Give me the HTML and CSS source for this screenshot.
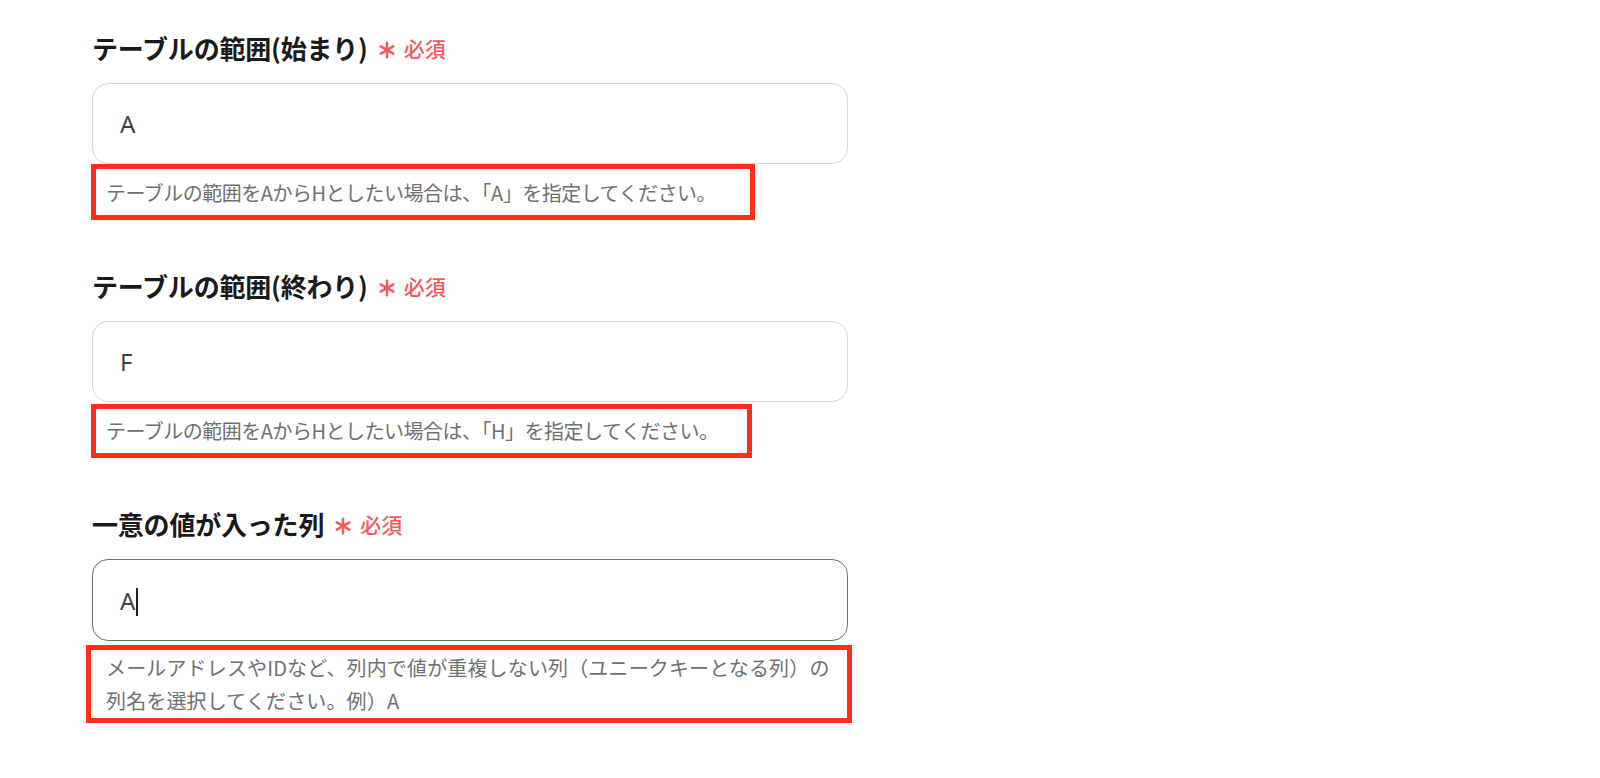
FILE: index.html
```html
<!DOCTYPE html>
<html lang="ja">
<head>
<meta charset="utf-8">
<title>フォーム</title>
<link rel="stylesheet" href="styles.css">
</head>
<body>
<main class="form">
  <section class="field field-first">
    <div class="label">テーブルの範囲(始まり)<span class="req"><svg class="ast" viewBox="0 0 20 20" aria-hidden="true"><path d="M10 2v16M3 6l14 8M17 6L3 14"/></svg>必須</span></div>
    <div class="input"><span class="value">A</span></div>
    <div class="help help-a">テーブルの範囲をAからHとしたい場合は、「A」を指定してください。</div>
  </section>
  <section class="field">
    <div class="label">テーブルの範囲(終わり)<span class="req"><svg class="ast" viewBox="0 0 20 20" aria-hidden="true"><path d="M10 2v16M3 6l14 8M17 6L3 14"/></svg>必須</span></div>
    <div class="input"><span class="value">F</span></div>
    <div class="help help-b">テーブルの範囲をAからHとしたい場合は、「H」を指定してください。</div>
  </section>
  <section class="field">
    <div class="label">一意の値が入った列<span class="req"><svg class="ast" viewBox="0 0 20 20" aria-hidden="true"><path d="M10 2v16M3 6l14 8M17 6L3 14"/></svg>必須</span></div>
    <div class="input input-focus"><span class="value">A</span><span class="caret"></span></div>
    <div class="help help-c">メールアドレスやIDなど、列内で値が重複しない列（ユニークキーとなる列）の<br>列名を選択してください。例）A</div>
  </section>
</main>
</body>
</html>
```
FILE: styles.css
```css
html, body {
  margin: 0;
  padding: 0;
  background: #ffffff;
}

body {
  font-family: "Noto Sans CJK JP", "Noto Sans", sans-serif;
  color: #1c1c1c;
}

.form {
  padding: 29px 0 0 92px;
  width: 770px;
}

.field {
  display: flex;
  flex-direction: column;
  align-items: flex-start;
  margin-top: 47px;
}

.field-first {
  margin-top: 0;
}

.label {
  display: flex;
  align-items: center;
  font-size: 26px;
  font-weight: 700;
  line-height: 38px;
  height: 38px;
  color: #1a1a1a;
  letter-spacing: -0.2px;
}

.req {
  display: inline-flex;
  align-items: center;
  margin-left: 10px;
  font-size: 21px;
  font-weight: 500;
  color: #f25b5b;
  letter-spacing: 0;
}

.ast {
  width: 18px;
  height: 18px;
  margin-right: 8px;
  margin-top: 4px;
  fill: none;
  stroke: #f25b5b;
  stroke-width: 2.8;
  stroke-linecap: round;
}

.input {
  box-sizing: border-box;
  width: 756px;
  height: 81px;
  margin-top: 16px;
  border: 1.5px solid #d4d6de;
  border-radius: 16px;
  display: flex;
  align-items: center;
  padding-left: 27px;
  font-family: "Noto Sans", sans-serif;
  font-size: 24px;
  color: #404040;
  background: #fff;
}

.input-focus {
  height: 82px;
  border-color: #6e6e6e;
}

.caret {
  display: inline-block;
  width: 1.5px;
  height: 28px;
  background: #222;
  margin-left: 1px;
  margin-top: 4px;
}

.help {
  box-sizing: border-box;
  border: 5px solid #ff2d1a;
  font-size: 20px;
  line-height: 32px;
  color: #707070;
}

.help-a {
  width: 664px;
  margin-left: -1px;
  padding: 8px 10px 6px 10px;
  letter-spacing: -0.5px;
}

.help-b {
  width: 661px;
  margin-top: 2px;
  margin-left: -1px;
  padding: 6px 10px 6px 10px;
  letter-spacing: -0.5px;
}

.help-c {
  width: 766px;
  margin-top: 4px;
  margin-left: -6px;
  padding: 1px 10px 1px 15px;
  line-height: 33px;
  letter-spacing: 0.15px;
}
```
